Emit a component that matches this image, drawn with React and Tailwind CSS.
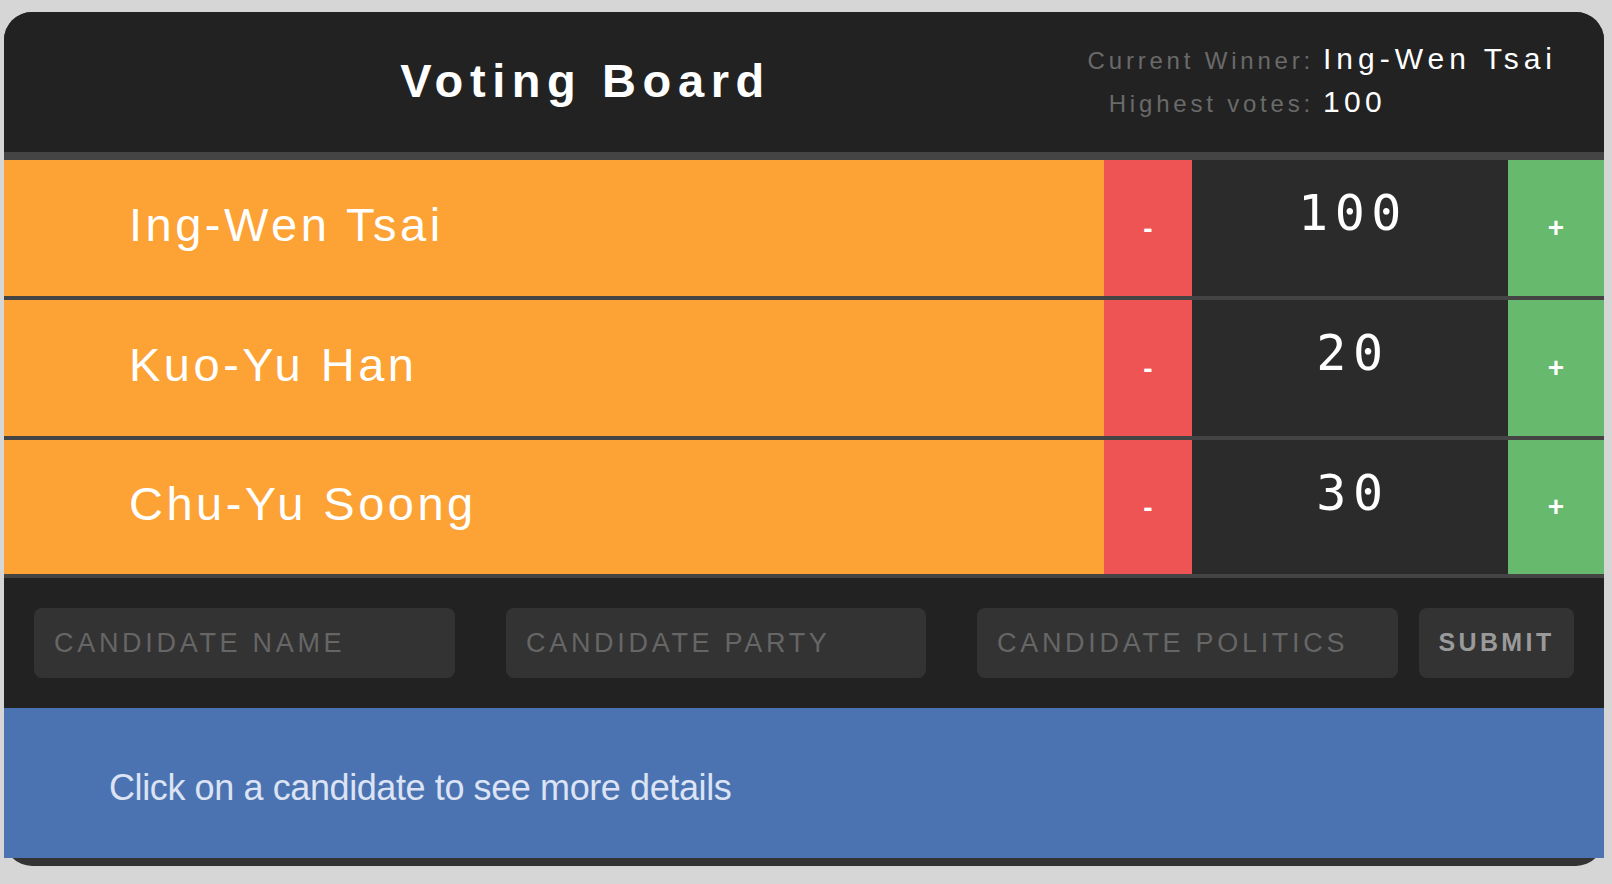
export default function App() {
  const candidates = [
    { name: "Ing-Wen Tsai", votes: 100, h: "h-[136px]", sep: true },
    { name: "Kuo-Yu Han", votes: 20, h: "h-[136px]", sep: true },
    { name: "Chu-Yu Soong", votes: 30, h: "h-[134px]", sep: false },
  ];
  return (
    <div className="min-h-screen bg-[#d6d6d6] pl-[4px] pt-[12px] font-['Liberation_Sans',Arial,sans-serif]">
      <div className="w-[1600px] rounded-[28px] bg-[#333] pb-[8px]">
        {/* Header */}
        <div className="flex h-[140px] items-center rounded-t-[28px] bg-[#222]">
          <div className="w-[1083px] pb-[3px] pl-[80px] text-center text-[47px] font-bold leading-none tracking-[6.6px] text-white">
            Voting Board
          </div>
          <div className="flex flex-col pb-[5px]">
            <div className="flex h-[43px] items-baseline">
              <span className="w-[227px] text-right text-[24px] leading-[43px] tracking-[3.8px] text-[#6a6a6a]">
                Current Winner:
              </span>
              <span className="ml-[9px] text-[30px] leading-[43px] tracking-[5px] text-white">
                Ing-Wen Tsai
              </span>
            </div>
            <div className="flex h-[43px] items-baseline">
              <span className="w-[227px] text-right text-[24px] leading-[43px] tracking-[3.8px] text-[#6a6a6a]">
                Highest votes:
              </span>
              <span className="ml-[9px] text-[30px] leading-[43px] tracking-[4.3px] text-white">
                100
              </span>
            </div>
          </div>
        </div>

        {/* Rows */}
        <div className="h-[8px] bg-[#444]" />
        {candidates.map((c) => (
          <div key={c.name}>
            <div className={`flex ${c.h}`}>
              <div className="flex w-[1100px] items-center bg-[#fda234] pb-[5px] pl-[125px] text-[47px] tracking-[3.5px] text-white">
                {c.name}
              </div>
              <button className="flex w-[88px] items-center justify-center bg-[#ef5455] pt-[2px] text-[28px] font-bold text-white">
                -
              </button>
              <div className="w-[316px] bg-[#2b2b2b] pl-[6px] pt-[23px] text-center font-['DejaVu_Sans_Mono',monospace] text-[50px] leading-[60px] tracking-[6.6px] text-white">
                {c.votes}
              </div>
              <button className="flex w-[96px] items-center justify-center bg-[#67b96d] text-[28px] font-bold text-white">
                +
              </button>
            </div>
            {c.sep && <div className="h-[4px] bg-[#444]" />}
          </div>
        ))}

        {/* Form */}
        <div className="h-[4px] bg-[#444]" />
        <div className="flex h-[130px] items-center bg-[#222] px-[30px]">
          <input
            placeholder="CANDIDATE NAME"
            className="h-[70px] w-[421px] rounded-[8px] bg-[#333] px-[20px] text-[27px] tracking-[3.7px] text-white outline-none placeholder:text-[#666]"
          />
          <input
            placeholder="CANDIDATE PARTY"
            className="ml-[51px] h-[70px] w-[420px] rounded-[8px] bg-[#333] px-[20px] text-[27px] tracking-[3.7px] text-white outline-none placeholder:text-[#666]"
          />
          <input
            placeholder="CANDIDATE POLITICS"
            className="ml-[51px] h-[70px] w-[421px] rounded-[8px] bg-[#333] px-[20px] text-[27px] tracking-[3.7px] text-white outline-none placeholder:text-[#666]"
          />
          <button className="ml-[21px] h-[70px] w-[155px] rounded-[8px] bg-[#333] text-[25px] font-bold tracking-[3.4px] text-[#9a9a9a]">
            SUBMIT
          </button>
        </div>

        {/* Details */}
        <div className="flex h-[150px] items-center bg-[#4b73b1] pl-[105px] pt-[9px] text-[36px] tracking-[-0.4px] text-[#dce3f4]">
          Click on a candidate to see more details
        </div>
      </div>
    </div>
  );
}
